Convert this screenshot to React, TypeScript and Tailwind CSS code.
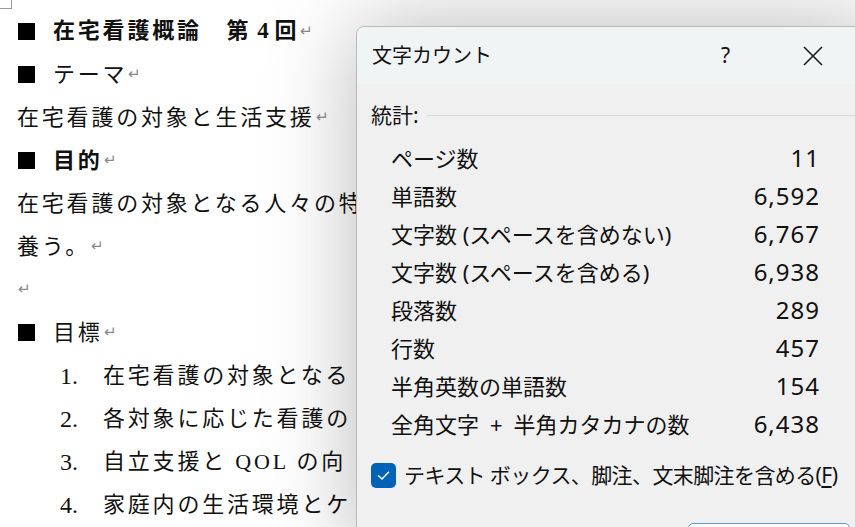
import type { ReactNode } from "react";

const DOC_FONT = { fontFamily: '"Liberation Serif", "Noto Sans CJK JP", serif' };
const UI_FONT = { fontFamily: '"Noto Sans", "Noto Sans CJK JP", sans-serif' };

const stats: [string, string][] = [
  ["ページ数", "11"],
  ["単語数", "6,592"],
  ["文字数 (スペースを含めない)", "6,767"],
  ["文字数 (スペースを含める)", "6,938"],
  ["段落数", "289"],
  ["行数", "457"],
  ["半角英数の単語数", "154"],
  ["全角文字\u2002+\u2002半角カタカナの数", "6,438"],
];

function Ret() {
  return <span className="text-[15px] text-[#8a8a8a] tracking-normal ml-[1px]">↵</span>;
}

function Line({ children }: { children: ReactNode }) {
  return <div className="h-[43px] flex items-center whitespace-nowrap">{children}</div>;
}

function Heading({ children, bold }: { children: ReactNode; bold?: boolean }) {
  return (
    <Line>
      <span className="w-[17px] h-[17px] bg-black ml-[1px] mr-[18px] shrink-0" />
      <span className={bold ? "font-bold" : ""}>{children}</span>
      <Ret />
    </Line>
  );
}

function Item({ n, text }: { n: number; text: string }) {
  return (
    <Line>
      <span className="w-[43px] ml-[43px] shrink-0 tracking-normal text-[24px]">{n}.</span>
      <span className="shrink-0">{text}</span>
    </Line>
  );
}

function Document() {
  return (
    <div className="w-[356px] overflow-hidden pl-[17px] pt-[10px] text-[22px] tracking-[2.8px] text-[#111]" style={DOC_FONT}>
      <Heading bold>
        在宅看護概論　第<span className="tracking-normal text-[23px]"> 4 </span>回
      </Heading>
      <Heading>テーマ</Heading>
      <Line>
        在宅看護の対象と生活支援
        <Ret />
      </Line>
      <Heading bold>目的</Heading>
      <Line>在宅看護の対象となる人々の特</Line>
      <Line>
        養う。
        <Ret />
      </Line>
      <Line>
        <Ret />
      </Line>
      <Heading>目標</Heading>
      <Item n={1} text="在宅看護の対象となる" />
      <Item n={2} text="各対象に応じた看護の" />
      <Item n={3} text="自立支援と QOL の向" />
      <Item n={4} text="家庭内の生活環境とケ" />
    </div>
  );
}

function Dialog() {
  return (
    <div
      className="absolute left-[356px] top-[26px] w-[530px] h-[530px] rounded-tl-[8px] border border-[#b9b9b9] bg-[#f0f0f0] shadow-[0_0_90px_rgba(0,0,0,0.28)] flex flex-col text-[#111]"
      style={UI_FONT}
    >
      <div className="h-[57px] shrink-0 rounded-tl-[8px] bg-[#f1f4f4] flex items-center pl-[15px]">
        <span className="text-[20px] leading-none">文字カウント</span>
        <span className="ml-[229px] text-[21px] leading-none">?</span>
        <svg className="ml-[72px]" width="22" height="22" viewBox="0 0 22 22" fill="none" stroke="#1a1a1a" strokeWidth="1.6">
          <path d="M2 2 L20 20 M20 2 L2 20" />
        </svg>
      </div>
      <div className="flex flex-col">
        <div className="mt-[20px] ml-[14px] flex items-center h-[22px]">
          <span className="text-[21px] leading-none">統計:</span>
          <div className="ml-[8px] flex-1 h-px bg-[#d8d8d8]" />
        </div>
        <div className="mt-[13px] ml-[34px] w-[429px] flex flex-col">
          {stats.map(([label, value]) => (
            <div key={label} className="h-[38px] flex items-center justify-between">
              <span className="text-[22px] leading-none">{label}</span>
              <span className="text-[24px] leading-none tracking-[1px]">{value}</span>
            </div>
          ))}
        </div>
        <div className="mt-[13px] ml-[14px] h-[38px] flex items-center">
          <span className="w-[25px] h-[25px] rounded-[5px] bg-[#0063b8] flex items-center justify-center shrink-0">
            <svg width="15" height="15" viewBox="0 0 15 15" fill="none" stroke="white" strokeWidth="1.5" strokeLinecap="round" strokeLinejoin="round">
              <path d="M2.5 7.8 L6 11 L12.5 4.2" />
            </svg>
          </span>
          <span className="ml-[8px] text-[21px] leading-none whitespace-nowrap tracking-[-0.6px]">
            テキスト ボックス、脚注、文末脚注を含める(<span className="underline underline-offset-[3px]">F</span>)
          </span>
        </div>
        <div className="mt-[29px] ml-[331px] w-[162px] h-[40px] rounded-[5px] border border-[#5b9bd5] bg-[#fdfdfd]" />
      </div>
    </div>
  );
}

export default function App() {
  return (
    <div className="relative w-[855px] h-[527px] overflow-hidden bg-white">
      <div className="absolute left-0 top-0 w-[12px] h-[9px] border-r border-b border-[#9a9a9a]" />
      <Document />
      <Dialog />
    </div>
  );
}
